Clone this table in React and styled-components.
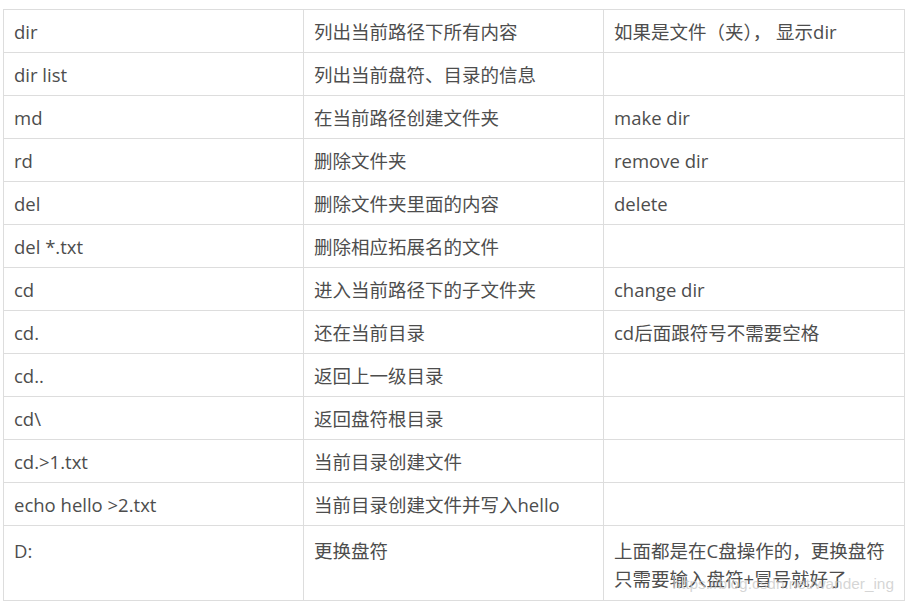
import React from 'react'
import styled, { createGlobalStyle } from 'styled-components'

const GlobalStyle = createGlobalStyle`
    html, body {
        margin: 0;
        padding: 0;
        background: #fff;
    }
`;

const Page = styled.div`
    padding: 9px 3px;
    font-family: "Open Sans", "Noto Sans CJK SC", sans-serif;
    font-size: 18.5px;
    color: #4d4d4d;
`;

const Wrap = styled.div`
    position: relative;
    width: 901px;
`;

const Table = styled.table`
    width: 901px;
    border-collapse: collapse;
    table-layout: fixed;
`;

const Col = styled.col`
    width: ${p => p.$w}px;
`;

const Cell = styled.td`
    border: 1px solid #ddd;
    padding: ${p => (p.$tall ? '11px 10px 7px' : '8px 10px 6px')};
    line-height: 28px;
    vertical-align: ${p => (p.$tall ? 'top' : 'middle')};
    white-space: ${p => (p.$tall ? 'normal' : 'nowrap')};
`;

const Watermark = styled.span`
    position: absolute;
    right: 10px;
    bottom: 8px;
    font-family: "Liberation Sans", Arial, sans-serif;
    font-size: 15.4px;
    color: rgba(200, 200, 200, 0.75);
    pointer-events: none;
`;

const rows = [
    ['dir', '列出当前路径下所有内容', '如果是文件（夹）， 显示dir'],
    ['dir list', '列出当前盘符、目录的信息', ''],
    ['md', '在当前路径创建文件夹', 'make dir'],
    ['rd', '删除文件夹', 'remove dir'],
    ['del', '删除文件夹里面的内容', 'delete'],
    ['del *.txt', '删除相应拓展名的文件', ''],
    ['cd', '进入当前路径下的子文件夹', 'change dir'],
    ['cd.', '还在当前目录', 'cd后面跟符号不需要空格'],
    ['cd..', '返回上一级目录', ''],
    ['cd\\', '返回盘符根目录', ''],
    ['cd.>1.txt', '当前目录创建文件', ''],
    ['echo hello >2.txt', '当前目录创建文件并写入hello', ''],
    ['D:', '更换盘符', '上面都是在C盘操作的，更换盘符只需要输入盘符+冒号就好了'],
];

export default function App() {
    return (
        <Page>
            <GlobalStyle />
            <Wrap>
                <Table>
                    <colgroup>
                        <Col $w={300} />
                        <Col $w={300} />
                        <Col $w={301} />
                    </colgroup>
                    <tbody>
                        {rows.map((r, i) => {
                            const tall = i === rows.length - 1;
                            return (
                                <tr key={i}>
                                    {r.map((text, j) => (
                                        <Cell key={j} $tall={tall}>{text}</Cell>
                                    ))}
                                </tr>
                            );
                        })}
                    </tbody>
                </Table>
                <Watermark>https://blog.csdn.net/wander_ing</Watermark>
            </Wrap>
        </Page>
    )
}
